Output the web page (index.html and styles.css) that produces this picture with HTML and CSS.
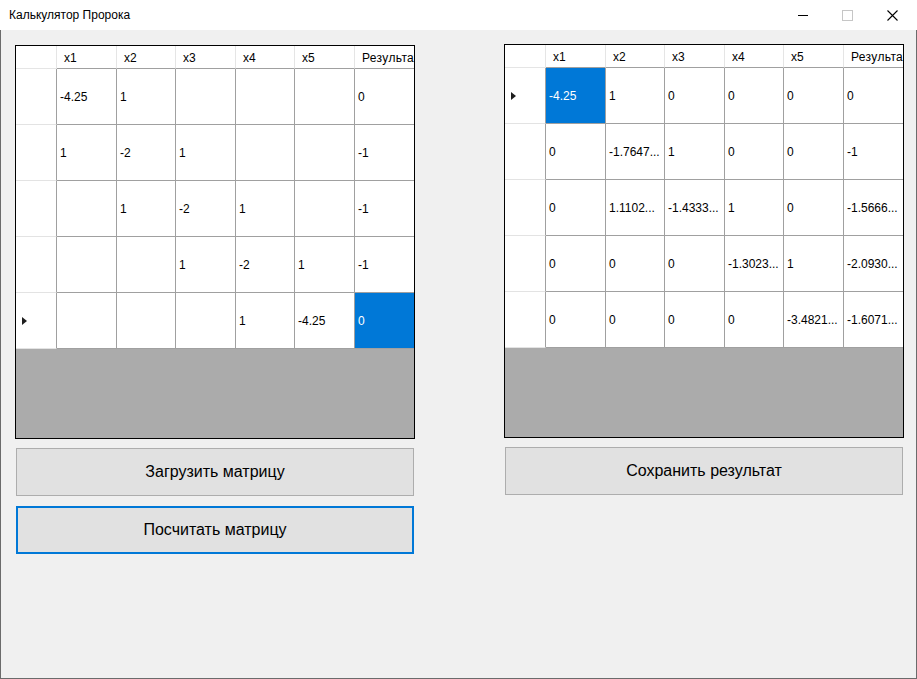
FILE: index.html
```html
<!DOCTYPE html>
<html lang="ru">
<head>
<meta charset="utf-8">
<title>Калькулятор Пророка</title>
<link rel="stylesheet" href="styles.css">
</head>
<body>
<div class="window">
  <div class="titlebar">
    <div class="title">Калькулятор Пророка</div>
    <div class="controls">
      <div class="ctl"><svg width="10" height="10" viewBox="0 0 10 10"><path d="M0 5.5H10" stroke="#000" stroke-width="1"/></svg></div>
      <div class="ctl"><svg width="11" height="11" viewBox="0 0 11 11"><rect x="0.5" y="0.5" width="10" height="10" fill="none" stroke="#c6c6c6" stroke-width="1"/></svg></div>
      <div class="ctl"><svg width="11" height="11" viewBox="0 0 11 11"><path d="M0.5 0.5L10.5 10.5M10.5 0.5L0.5 10.5" stroke="#000" stroke-width="1.1"/></svg></div>
    </div>
  </div>
  <div class="client">
    <div class="panel">
      <div class="grid">
        <div class="row head">
          <div class="c rh"></div><div class="c">x1</div><div class="c">x2</div><div class="c">x3</div><div class="c">x4</div><div class="c">x5</div><div class="c last">Результат</div>
        </div>
        <div class="row">
          <div class="c rh"></div><div class="c">-4.25</div><div class="c">1</div><div class="c"></div><div class="c"></div><div class="c"></div><div class="c">0</div>
        </div>
        <div class="row">
          <div class="c rh"></div><div class="c">1</div><div class="c">-2</div><div class="c">1</div><div class="c"></div><div class="c"></div><div class="c">-1</div>
        </div>
        <div class="row">
          <div class="c rh"></div><div class="c"></div><div class="c">1</div><div class="c">-2</div><div class="c">1</div><div class="c"></div><div class="c">-1</div>
        </div>
        <div class="row">
          <div class="c rh"></div><div class="c"></div><div class="c"></div><div class="c">1</div><div class="c">-2</div><div class="c">1</div><div class="c">-1</div>
        </div>
        <div class="row">
          <div class="c rh"><span class="arrow"></span></div><div class="c"></div><div class="c"></div><div class="c"></div><div class="c">1</div><div class="c">-4.25</div><div class="c sel">0</div>
        </div>
        <div class="empty"></div>
      </div>
      <button class="btn">Загрузить матрицу</button>
      <button class="btn focus">Посчитать матрицу</button>
    </div>
    <div class="panel up">
      <div class="grid">
        <div class="row head">
          <div class="c rh"></div><div class="c">x1</div><div class="c">x2</div><div class="c">x3</div><div class="c">x4</div><div class="c">x5</div><div class="c last">Результат</div>
        </div>
        <div class="row">
          <div class="c rh"><span class="arrow"></span></div><div class="c sel">-4.25</div><div class="c">1</div><div class="c">0</div><div class="c">0</div><div class="c">0</div><div class="c">0</div>
        </div>
        <div class="row">
          <div class="c rh"></div><div class="c">0</div><div class="c">-1.7647...</div><div class="c">1</div><div class="c">0</div><div class="c">0</div><div class="c">-1</div>
        </div>
        <div class="row">
          <div class="c rh"></div><div class="c">0</div><div class="c">1.1102...</div><div class="c">-1.4333...</div><div class="c">1</div><div class="c">0</div><div class="c">-1.5666...</div>
        </div>
        <div class="row">
          <div class="c rh"></div><div class="c">0</div><div class="c">0</div><div class="c">0</div><div class="c">-1.3023...</div><div class="c">1</div><div class="c">-2.0930...</div>
        </div>
        <div class="row">
          <div class="c rh"></div><div class="c">0</div><div class="c">0</div><div class="c">0</div><div class="c">0</div><div class="c">-3.4821...</div><div class="c">-1.6071...</div>
        </div>
        <div class="empty"></div>
      </div>
      <button class="btn">Сохранить результат</button>
    </div>
  </div>
</div>
</body>
</html>
```

FILE: styles.css
```css
* { box-sizing: border-box; }
html, body { margin: 0; padding: 0; }
body {
  width: 917px;
  height: 679px;
  overflow: hidden;
  font-family: "Liberation Sans", Arial, sans-serif;
  color: #000;
  background: #f0f0f0;
}
.window {
  width: 917px;
  height: 679px;
  display: flex;
  flex-direction: column;
}
.titlebar {
  height: 30px;
  background: #fff;
  display: flex;
  align-items: center;
  padding-right: 2px;
  flex: none;
}
.title {
  padding-left: 9px;
  font-size: 12px;
}
.controls {
  margin-left: auto;
  display: flex;
  height: 30px;
}
.ctl {
  width: 45px;
  height: 30px;
  display: flex;
  align-items: center;
  justify-content: center;
}
.client {
  flex: 1;
  background: #f0f0f0;
  border: 1px solid #6b6b6b;
  border-top: none;
  display: flex;
  align-items: flex-start;
  padding: 15px 0 0 14px;
  gap: 89px;
}
.panel {
  width: 400px;
  display: flex;
  flex-direction: column;
}
.panel.up { margin-top: -1px; }
.grid {
  width: 400px;
  height: 394px;
  border: 1px solid #000;
  background: #ababab;
  display: flex;
  flex-direction: column;
  overflow: hidden;
}
.row {
  display: grid;
  grid-template-columns: 41px 60px 59px 60px 59px 60px 59px;
  height: 56px;
  background: #fff;
  flex: none;
}
.row.head { height: 23px; }
.c {
  font-size: 12px;
  border-right: 1px solid #a0a0a0;
  border-bottom: 1px solid #a0a0a0;
  padding-left: 3px;
  display: flex;
  align-items: center;
  white-space: nowrap;
  overflow: hidden;
}
.c:last-child { border-right: none; }
.head .c {
  border-right: 1px solid #e5e5e5;
  padding-left: 7px;
  padding-top: 1px;
}
.head .c.last {
  padding-left: 7px;
  border-right: none;
  letter-spacing: 0.35px;
}
.head .c.rh { border-bottom-color: #e5e5e5; }
.c.rh {
  border-bottom-color: #e3e3e3;
  padding-left: 6px;
}
.head .c.rh { border-right-color: #e5e5e5; }
.c.sel {
  background: #0078d7;
  color: #fff;
  border-bottom-color: #a0a0a0;
}
.arrow {
  width: 0;
  height: 0;
  border-left: 5px solid #1e1e1e;
  border-top: 4.5px solid transparent;
  border-bottom: 4.5px solid transparent;
}
.empty { flex: 1; }
.btn {
  font-family: "Liberation Sans", Arial, sans-serif;
  font-size: 16px;
  color: #000;
  width: 398px;
  height: 48px;
  margin-left: 1px;
  background: #e1e1e1;
  border: 1px solid #adadad;
  padding: 0;
  margin-top: 9px;
}
.btn + .btn { margin-top: 10px; }
.btn.focus { border: 2px solid #0078d7; }
```
